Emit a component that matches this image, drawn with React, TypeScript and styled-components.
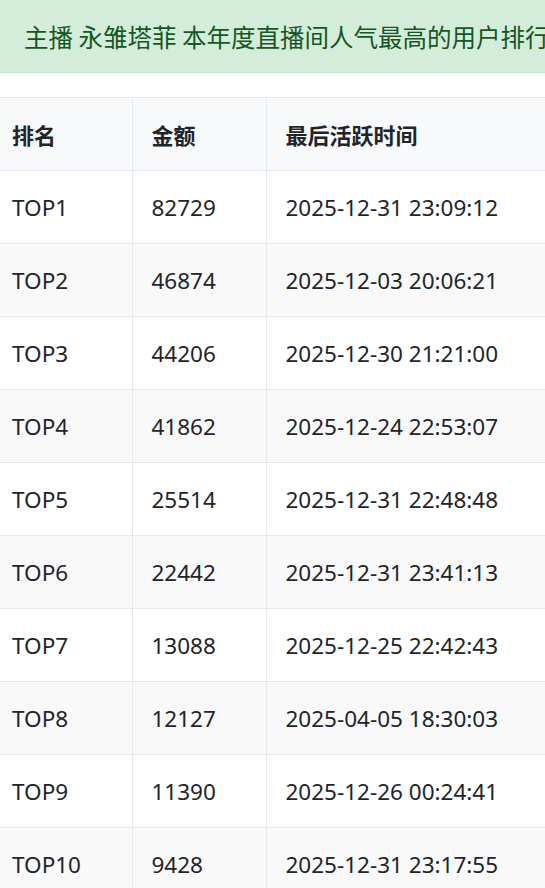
import React from "react";
import styled, { createGlobalStyle } from "styled-components";

const Global = createGlobalStyle`
  html, body {
    margin: 0;
    padding: 0;
    overflow: hidden;
    background: #ffffff;
  }
  body {
    font-family: "Noto Sans", "Noto Sans CJK SC", sans-serif;
    color: #212529;
  }
`;

const Page = styled.div`
  width: 545px;
  display: flex;
  flex-direction: column;
  gap: 24px;
`;

const Banner = styled.div`
  height: 72px;
  display: flex;
  align-items: center;
  padding: 0 24px;
  background: #d4edda;
  border-bottom: 1px solid #c3e6cb;
  color: #155724;
  font-size: 24.5px;
  white-space: nowrap;
  font-family: "Noto Sans CJK SC", sans-serif;
`;

const Table = styled.table`
  width: 100%;
  border-collapse: collapse;
  font-size: 22.5px;
  table-layout: fixed;
`;

const HeadCell = styled.th<{ $w?: number; $first?: boolean }>`
  box-sizing: border-box;
  ${(p) => (p.$w ? `width: ${p.$w}px;` : "")}
  height: 73px;
  padding: 0 12px 0 ${(p) => (p.$first ? 12 : 19)}px;
  text-align: left;
  font-weight: 700;
  font-size: 22px;
  background: #f8f9fa;
  border-top: 1px solid #e5e8ec;
  border-bottom: 1px solid #e5e8ec;
  border-left: ${(p) => (p.$first ? "none" : "1px solid #e5e8ec")};
  color: #212529;
  white-space: nowrap;
`;

const Row = styled.tr<{ $alt: boolean }>`
  background: ${(p) => (p.$alt ? "#f9f9f9" : "#ffffff")};
`;

const Cell = styled.td<{ $first?: boolean }>`
  box-sizing: border-box;
  height: 73px;
  padding: 0 12px 0 ${(p) => (p.$first ? 12 : 19)}px;
  border-bottom: 1px solid #e8e8e8;
  border-left: ${(p) => (p.$first ? "none" : "1px solid #e8e8e8")};
  white-space: nowrap;
  color: #212529;
`;

const data: [string, string, string][] = [
  ["TOP1", "82729", "2025-12-31 23:09:12"],
  ["TOP2", "46874", "2025-12-03 20:06:21"],
  ["TOP3", "44206", "2025-12-30 21:21:00"],
  ["TOP4", "41862", "2025-12-24 22:53:07"],
  ["TOP5", "25514", "2025-12-31 22:48:48"],
  ["TOP6", "22442", "2025-12-31 23:41:13"],
  ["TOP7", "13088", "2025-12-25 22:42:43"],
  ["TOP8", "12127", "2025-04-05 18:30:03"],
  ["TOP9", "11390", "2025-12-26 00:24:41"],
  ["TOP10", "9428", "2025-12-31 23:17:55"],
];

export default function App() {
  return (
    <>
      <Global />
      <Page>
        <Banner>主播 永雏塔菲 本年度直播间人气最高的用户排行榜</Banner>
        <Table>
          <thead>
            <tr>
              <HeadCell $w={132} $first>排名</HeadCell>
              <HeadCell $w={134}>金额</HeadCell>
              <HeadCell>最后活跃时间</HeadCell>
            </tr>
          </thead>
          <tbody>
            {data.map((d, i) => (
              <Row key={d[0]} $alt={i % 2 === 1}>
                <Cell $first>{d[0]}</Cell>
                <Cell>{d[1]}</Cell>
                <Cell>{d[2]}</Cell>
              </Row>
            ))}
          </tbody>
        </Table>
      </Page>
    </>
  );
}
